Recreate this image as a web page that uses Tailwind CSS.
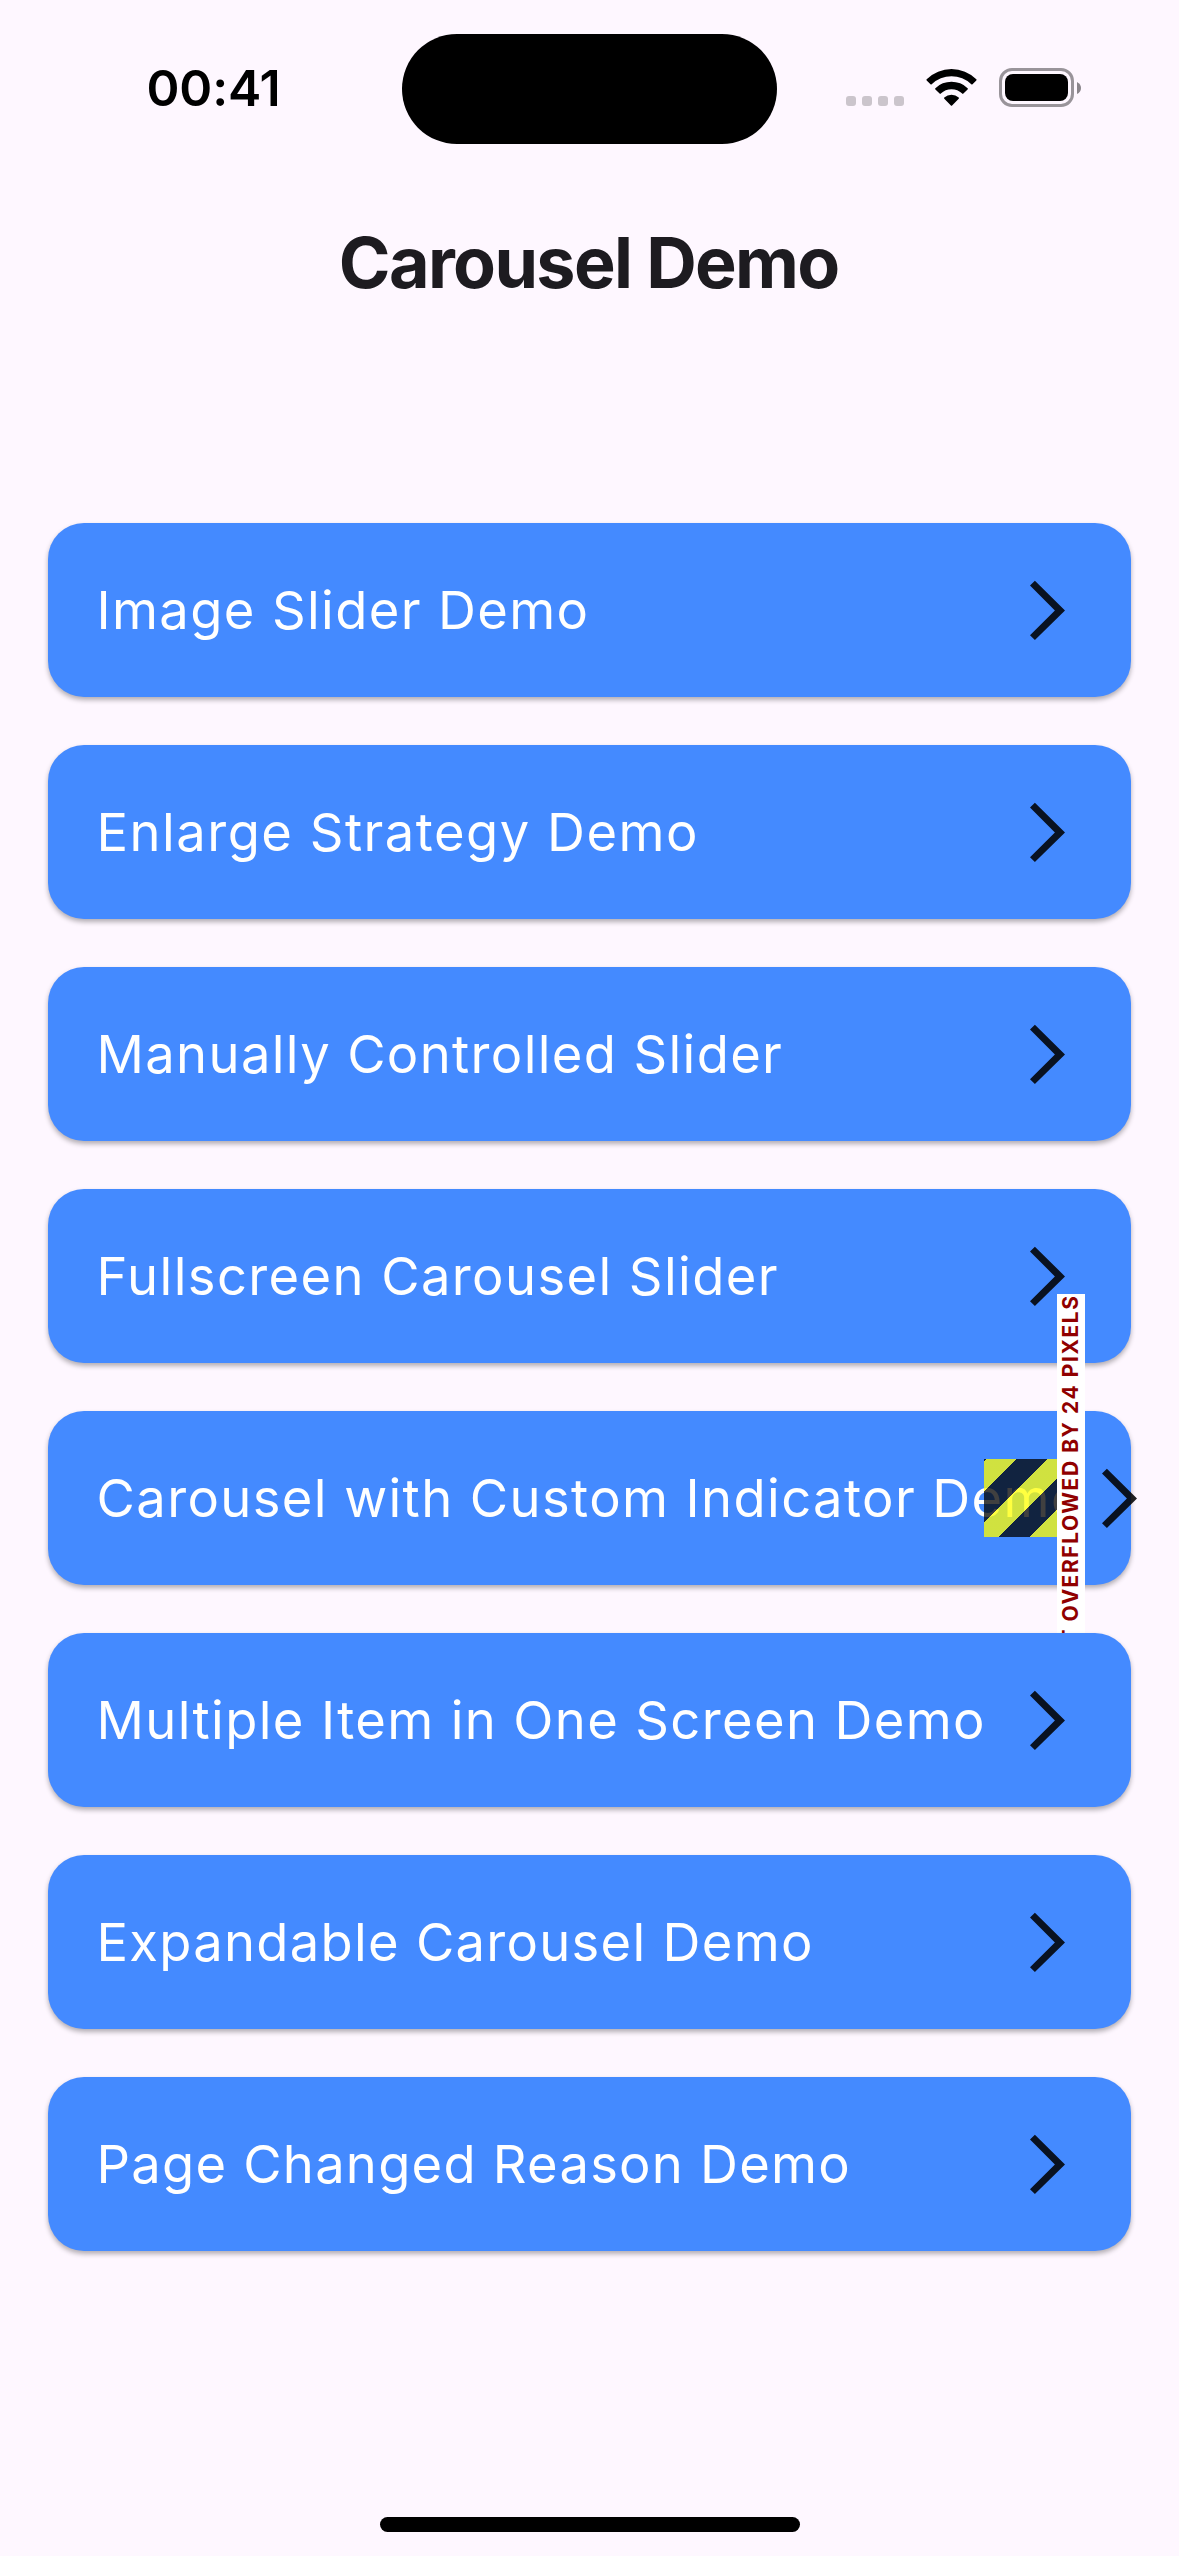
<!DOCTYPE html>
<html lang="en">
<head>
<meta charset="utf-8">
<title>Carousel Demo</title>
<script src="https://cdn.jsdelivr.net/npm/@tailwindcss/browser@4"></script>
</head>
<body class="bg-[#fef7ff]">
<svg class="hidden"><symbol id="chevron" viewBox="0 0 35 60"><path fill-opacity=".87" d="M0 5.600 4.900.7 35 30.400 4.900 60 0 55.300 24.900 30.400z"/></symbol></svg>
<div class="flex h-[2556px] w-[1179px] flex-col overflow-hidden bg-[#fef7ff] font-['Inter',sans-serif]">
  <!-- Status bar -->
  <header class="grid h-[177px] grid-cols-[402px_375px_402px] pt-[34px]">
    <div class="flex h-[107px] items-center pl-[146.500px] text-[50px] leading-none font-semibold tracking-[-0.150px] text-black">00:41</div>
    <div class="h-[110px] rounded-full bg-black"></div>
    <div class="flex h-[107px] items-center pl-[69px]">
      <div class="mt-[27px] flex gap-1.5">
        <i class="size-2.5 rounded-[3px] bg-[#cbc5cc]"></i><i class="size-2.5 rounded-[3px] bg-[#cbc5cc]"></i><i class="size-2.5 rounded-[3px] bg-[#cbc5cc]"></i><i class="size-2.5 rounded-[3px] bg-[#cbc5cc]"></i>
      </div>
      <svg class="ml-[22px] h-[37px] w-[51px]" viewBox="0 0 51 37"><path d="M.7 10.200a35.500 35.500 0 0 1 49.600 0q.6.600 0 1.200l-3.800 3.800q-.6.600-1.200 0a28.500 28.500 0 0 0-39.600 0q-.6.600-1.200 0L.7 11.400q-.6-.6 0-1.200zM9.400 19.200a23 23 0 0 1 32.200 0q.6.600 0 1.200L37.400 24.600q-.6.600-1.200 0a15.600 15.600 0 0 0-21.400 0q-.6.600-1.200 0L9.400 20.400q-.6-.6 0-1.200zM18.300 28.500a10.500 10.500 0 0 1 14.400 0q.6.600 0 1.200L26.100 36.400q-.6.600-1.200 0L18.300 29.700q-.6-.6 0-1.200z"/></svg>
      <div class="ml-[22px] h-[39px] w-[75px] rounded-[13px] border-3 border-[#99949a] p-[3px]"><div class="h-full rounded-[8px] bg-black"></div></div>
      <svg class="ml-[3px] h-[12px] w-1" viewBox="0 0 4 12"><path fill="#8a858b" d="M0 0Q4 2 4 6T0 12z"/></svg>
    </div>
  </header>

  <h1 class="mb-[175.300px] flex h-[171px] items-center justify-center pr-[1.500px] text-[70px] leading-none font-bold tracking-[-1.650px] text-[#1d1b20]">Carousel Demo</h1>

  <!-- Demo list -->
  <main class="flex flex-col gap-12 px-12 text-[52.500px] leading-none whitespace-nowrap text-white *:relative *:flex *:h-[174px] *:items-center *:justify-between *:rounded-[36px] *:bg-[#448aff] *:pr-[66px] *:pl-[48.500px] *:shadow-[0_3px_5px_rgba(0,0,0,0.3)]">
    <a><span class="tracking-[1.380px]">Image Slider Demo</span><svg class="h-[60px] w-[35px]"><use href="#chevron"/></svg></a>
    <a><span class="tracking-[1.500px]">Enlarge Strategy Demo</span><svg class="h-[60px] w-[35px]"><use href="#chevron"/></svg></a>
    <a><span class="tracking-[1.360px]">Manually Controlled Slider</span><svg class="h-[60px] w-[35px]"><use href="#chevron"/></svg></a>
    <a><span class="tracking-[1.400px]">Fullscreen Carousel Slider</span><svg class="h-[60px] w-[35px]"><use href="#chevron"/></svg></a>
    <a>
      <span class="tracking-[1.400px]">Carousel with Custom Indicator Demo</span>
      <svg class="-mr-[72px] h-[60px] w-[35px] shrink-0"><use href="#chevron"/></svg>
      <!-- Overflow warning -->
      <div class="absolute top-12 left-[936px] h-[78px] w-[78px] bg-[repeating-linear-gradient(135deg,#000000bf_0px,#000000bf_2.120px,#ffff00bf_2.120px,#ffff00bf_23.330px,#000000bf_23.330px,#000000bf_42.430px)]"></div>
      <div class="absolute -top-[117px] left-[1009px] h-[408px] w-[28px] rotate-180 bg-white text-end text-[21px] leading-[28px] font-bold tracking-[1.560px] text-[#900000] [writing-mode:vertical-rl]">RIGHT OVERFLOWED BY 24 PIXELS</div>
    </a>
    <a><span class="tracking-[1.370px]">Multiple Item in One Screen Demo</span><svg class="h-[60px] w-[35px]"><use href="#chevron"/></svg></a>
    <a><span class="tracking-[1.290px]">Expandable Carousel Demo</span><svg class="h-[60px] w-[35px]"><use href="#chevron"/></svg></a>
    <a><span class="tracking-[1.240px]">Page Changed Reason Demo</span><svg class="h-[60px] w-[35px]"><use href="#chevron"/></svg></a>
  </main>

  <div class="mx-auto mt-auto mb-6 h-[15px] w-[420px] rounded-full bg-black"></div>
</div>
</body>
</html>
